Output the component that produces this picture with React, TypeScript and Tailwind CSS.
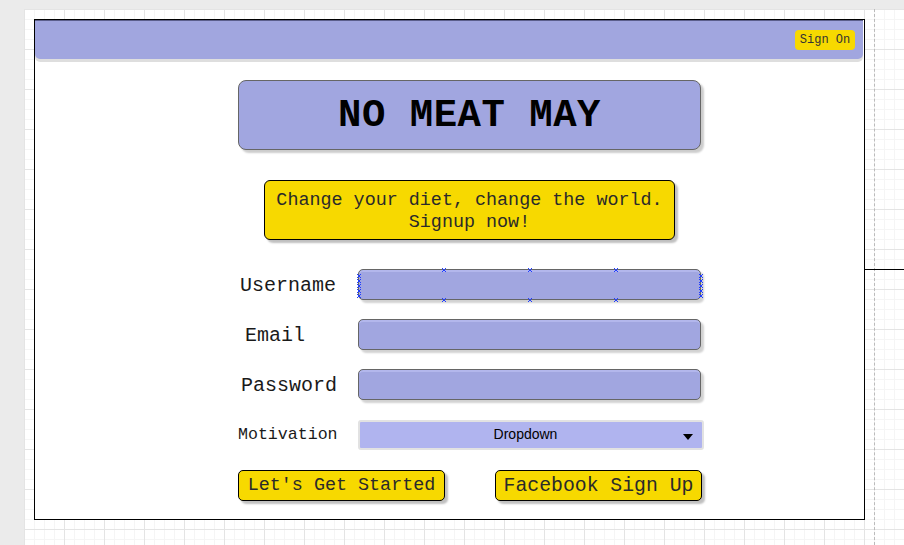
import React from 'react'

const mono = "font-['Liberation_Mono','Courier_New',monospace]"

function Markers() {
  const xs = [85, 171, 257]
  const side = [6, 11, 16, 21, 26]
  const pts: [number, number][] = [
    ...xs.map(x => [x + 3, 3] as [number, number]),
    ...xs.map(x => [x + 3, 33] as [number, number]),
    ...side.map(y => [3, y + 3] as [number, number]),
    ...side.map(y => [345, y + 3] as [number, number]),
  ]
  return (
    <svg className="absolute -left-[3px] -top-[3px] pointer-events-none" width={350} height={37}>
      {pts.map(([x, y], i) => (
        <g key={i} stroke="#1f3cff" strokeWidth={1}>
          <line x1={x - 2} y1={y - 2} x2={x + 2} y2={y + 2} />
          <line x1={x - 2} y1={y + 2} x2={x + 2} y2={y - 2} />
        </g>
      ))}
    </svg>
  )
}

function Field({ label, pad, selected }: { label: string; pad: string; selected?: boolean }) {
  return (
    <div className="flex items-center h-[31px]">
      <span className={`w-[120px] pt-[3px] text-[20px] text-[#1a1a1a] ${pad}`}>{label}</span>
      <div className="relative w-[343px] h-[31px] bg-[#a1a6e0] border border-[#666] rounded-[5px] shadow-[inset_0_2px_0_#b3b7ec,3px_3px_2px_rgba(0,0,0,0.18)]">
        {selected && <Markers />}
      </div>
    </div>
  )
}

export default function App() {
  return (
    <div className="relative w-[904px] h-[545px] overflow-hidden bg-[#ebebeb] pl-[24px] pt-[9px]">
      <div className="relative h-[536px] bg-white bg-[linear-gradient(to_right,#e4e4e4_1px,transparent_1px),linear-gradient(to_bottom,#e4e4e4_1px,transparent_1px),linear-gradient(to_right,#f5f5f5_1px,transparent_1px),linear-gradient(to_bottom,#f5f5f5_1px,transparent_1px)] bg-[size:40px_40px,40px_40px,10px_10px,10px_10px] pl-[10px] pt-[10px]">
        <div className="absolute left-[850px] top-0 h-full border-l border-dashed border-[#bbb]" />
        <div className="absolute left-[841px] top-[260px] w-[60px] border-t border-black" />

        <div className={`relative w-[831px] h-[501px] border border-black bg-white ${mono}`}>
          <header className="flex items-center justify-end w-[828px] h-[39px] bg-[#a1a6df] border-t border-[#5c5f8c] rounded-b-[5px] shadow-[0_3px_0_#dedede] pr-[8px]">
            <button className="h-[20px] w-[60px] bg-[#f7d900] rounded-[4px] text-[12px] text-[#333] leading-none">
              Sign On
            </button>
          </header>

          <div className="ml-[203px] flex flex-col">
            <div className="mt-[21px] w-[463px] h-[70px] flex items-center justify-center bg-[#a1a6e0] border border-[#666] rounded-[8px] shadow-[3px_3px_2px_rgba(0,0,0,0.2)]">
              <h1 className="pt-[2px] text-[39px] font-bold text-black tracking-[0.5px]">NO MEAT MAY</h1>
            </div>

            <div className="mt-[30px] ml-[26px] w-[411px] h-[60px] flex items-center justify-center text-center bg-[#f7d900] border border-black rounded-[6px] shadow-[3px_3px_2px_rgba(0,0,0,0.25)]">
              <p className="pt-[3px] text-[18.4px] leading-[22px] text-[#2a2a2a]">
                Change your diet, change the world.
                <br />
                Signup now!
              </p>
            </div>

            <div className="mt-[29px] flex flex-col gap-[19px]">
              <Field label="Username" pad="pl-[2px]" selected />
              <Field label="Email" pad="pl-[7px]" />
              <Field label="Password" pad="pl-[3px]" />
              <div className="flex items-center h-[31px]">
                <span className="w-[120px] pt-[2px] text-[16.6px] text-[#1a1a1a]">Motivation</span>
                <div className="relative w-[346px] h-[30px] flex items-center justify-center pr-[11px] bg-[#b0b4ef] border-2 border-[#e2e2e2] rounded-[3px]">
                  <span className="font-['Liberation_Sans',Arial,sans-serif] text-[14px] text-black">Dropdown</span>
                  <svg className="absolute right-[9px] top-[12px]" width="10" height="6" viewBox="0 0 10 6">
                    <path d="M0 0h10L5 6z" fill="#000" />
                  </svg>
                </div>
              </div>
            </div>

            <div className="mt-[20px] flex gap-[50px]">
              <button className="w-[207px] h-[31px] bg-[#f7d900] border border-black rounded-[5px] shadow-[3px_3px_2px_rgba(0,0,0,0.25)] text-[18.4px] text-[#2a2a2a]">
                Let's Get Started
              </button>
              <button className="w-[207px] h-[31px] pt-[1px] bg-[#f7d900] border border-black rounded-[5px] shadow-[3px_3px_2px_rgba(0,0,0,0.25)] text-[19.8px] text-[#2a2a2a]">
                Facebook Sign Up
              </button>
            </div>
          </div>
        </div>
      </div>
    </div>
  )
}
